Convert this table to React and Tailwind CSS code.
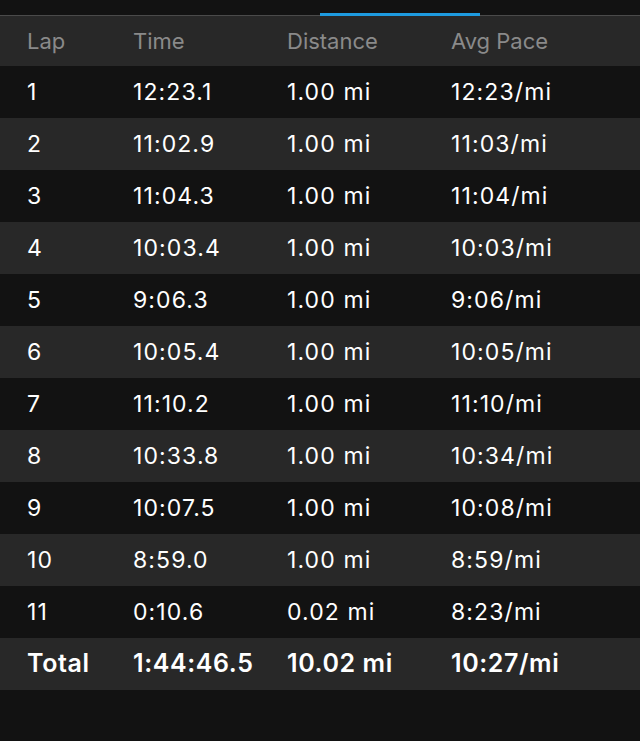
const laps = [
  ["1", "12:23.1", "1.00 mi", "12:23/mi"],
  ["2", "11:02.9", "1.00 mi", "11:03/mi"],
  ["3", "11:04.3", "1.00 mi", "11:04/mi"],
  ["4", "10:03.4", "1.00 mi", "10:03/mi"],
  ["5", "9:06.3", "1.00 mi", "9:06/mi"],
  ["6", "10:05.4", "1.00 mi", "10:05/mi"],
  ["7", "11:10.2", "1.00 mi", "11:10/mi"],
  ["8", "10:33.8", "1.00 mi", "10:34/mi"],
  ["9", "10:07.5", "1.00 mi", "10:08/mi"],
  ["10", "8:59.0", "1.00 mi", "8:59/mi"],
  ["11", "0:10.6", "0.02 mi", "8:23/mi"],
];

function Row({ cells, className }) {
  return (
    <div className={`grid grid-cols-[106px_154px_164px_1fr] items-center pl-[27px] ${className}`}>
      {cells.map((c, i) => (
        <div key={i}>{c}</div>
      ))}
    </div>
  );
}

export default function App() {
  return (
    <div
      className="min-h-[741px] w-[640px] bg-[#121212] text-white"
      style={{ fontFamily: "Inter, 'Noto Sans', sans-serif" }}
    >
      {/* tab strip */}
      <div className="relative h-4 border-b border-[#4a4a4a]">
        <div className="absolute bottom-[-1px] left-[320px] h-[3px] w-[160px] bg-[#1e9be0]" />
      </div>

      <Row
        cells={["Lap", "Time", "Distance", "Avg Pace"]}
        className="h-[50px] bg-[#282828] text-[22px] text-[#8a8a8a]"
      />

      {laps.map((lap, i) => (
        <Row
          key={lap[0]}
          cells={lap}
          className={`h-[52px] text-[23px] tracking-[1.1px] ${i % 2 === 0 ? "bg-[#121212]" : "bg-[#282828]"}`}
        />
      ))}

      <Row
        cells={["Total", "1:44:46.5", "10.02 mi", "10:27/mi"]}
        className="h-[52px] bg-[#282828] text-[25px] font-semibold tracking-[0.6px]"
      />
    </div>
  );
}
